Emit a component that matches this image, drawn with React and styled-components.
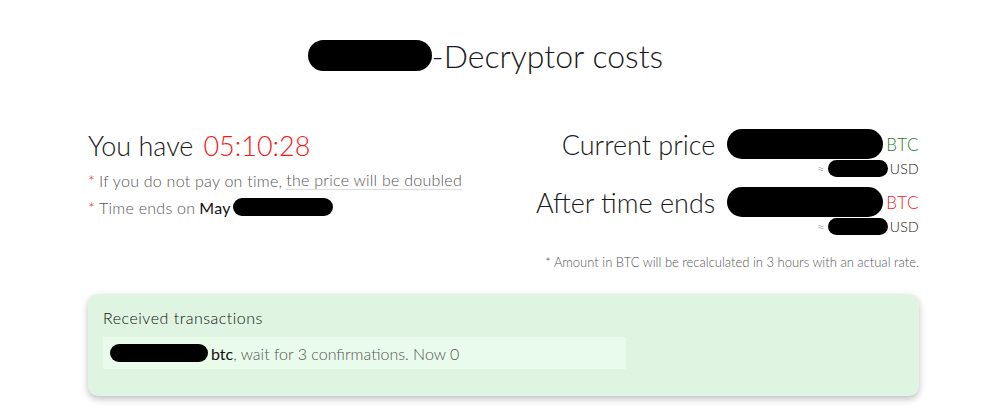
import React from 'react'
import styled, { createGlobalStyle } from 'styled-components'

const GlobalStyle = createGlobalStyle`
  html, body {
    margin: 0;
    padding: 0;
    background: #fff;
  }
  body {
    font-family: Lato, "Open Sans", sans-serif;
    font-weight: 300;
    color: #222;
  }
`

const Page = styled.div`
  width: 1000px;
  height: 418px;
  box-sizing: border-box;
  padding: 37px 81px 0 88px;
`

const Title = styled.h1`
  margin: 0;
  display: flex;
  justify-content: center;
  align-items: center;
  font-size: 32px;
  font-weight: 300;
  color: #1a1a1a;
  height: 36px;
  padding-right: 36px;
`

const Redacted = styled.span`
  display: inline-block;
  width: ${p => p.w}px;
  height: ${p => p.h}px;
  background: #000;
  border-radius: ${p => p.h / 2}px;
  vertical-align: middle;
`

const Columns = styled.div`
  display: flex;
  justify-content: space-between;
  margin-top: 56px;
`

const Left = styled.div`
  display: flex;
  flex-direction: column;
`

const Countdown = styled.div`
  font-size: 27px;
  color: #1a1a1a;
  height: 32px;
  display: flex;
  align-items: center;
  gap: 10px;
`

const Timer = styled.span`
  color: #f21b1b;
`

const Note = styled.div`
  font-size: 16px;
  letter-spacing: 0.25px;
  color: #555;
  margin-top: ${p => p.mt || 0}px;
  display: flex;
  align-items: center;
  height: 20px;
`

const Star = styled.span`
  color: #e02020;
  margin-right: 4px;
`

const Dotted = styled.span`
  border-bottom: 1px solid #ddd;
  margin-left: 4px;
`

const Strong = styled.span`
  color: #111;
  font-weight: 400;
  margin: 0 2px 0 4px;
`

const Right = styled.div`
  display: flex;
  flex-direction: column;
  align-items: flex-end;
`

const PriceRow = styled.div`
  display: flex;
  align-items: center;
  height: 30px;
  margin-top: ${p => p.mt || 0}px;
`

const PriceLabel = styled.span`
  font-size: 27px;
  color: #1a1a1a;
  margin-right: 12px;
`

const Currency = styled.span`
  font-size: 17px;
  color: ${p => p.color};
  margin-left: 3px;
  letter-spacing: 0.6px;
`

const UsdRow = styled.div`
  display: flex;
  align-items: center;
  height: 18px;
  font-size: 14px;
  color: #111;
`

const Approx = styled.span`
  color: #888;
  font-size: 14px;
  margin-right: 3px;
`

const Usd = styled.span`
  margin-left: 2px;
  letter-spacing: 0.3px;
`

const Footnote = styled.div`
  margin-top: 19px;
  font-size: 13px;
  color: #555;
`

const Card = styled.div`
  margin-top: 24px;
  background: #dff5e1;
  border-radius: 10px;
  box-shadow: 0 3px 7px rgba(0, 0, 0, 0.25);
  padding: 14px 15px 26px;
  height: 102px;
  box-sizing: border-box;
`

const CardTitle = styled.div`
  font-size: 16px;
  letter-spacing: 0.5px;
  color: #111;
`

const TxRow = styled.div`
  margin-top: 10px;
  width: 523px;
  height: 32px;
  background: #e9fbea;
  display: flex;
  align-items: center;
  padding-left: 7px;
  box-sizing: border-box;
  font-size: 16px;
  color: #555;
`

const Btc = styled.span`
  color: #111;
  font-weight: 400;
  margin-left: 3px;
`

export default function App() {
  return (
    <Page>
      <GlobalStyle />
      <Title>
        <Redacted w={124} h={31} />
        -Decryptor costs
      </Title>
      <Columns>
        <Left>
          <Countdown>
            You have <Timer>05:10:28</Timer>
          </Countdown>
          <Note mt={9}>
            <Star>*</Star> If you do not pay on time,
            <Dotted>the price will be doubled</Dotted>
          </Note>
          <Note mt={7}>
            <Star>*</Star> Time ends on <Strong>May</Strong>
            <Redacted w={100} h={18} />
          </Note>
        </Left>
        <Right>
          <PriceRow>
            <PriceLabel>Current price</PriceLabel>
            <Redacted w={156} h={30} />
            <Currency color="#2a7a2a">BTC</Currency>
          </PriceRow>
          <UsdRow>
            <Approx>≈</Approx>
            <Redacted w={60} h={17} />
            <Usd>USD</Usd>
          </UsdRow>
          <PriceRow mt={10}>
            <PriceLabel>After time ends</PriceLabel>
            <Redacted w={156} h={30} />
            <Currency color="#f21b1b">BTC</Currency>
          </PriceRow>
          <UsdRow>
            <Approx>≈</Approx>
            <Redacted w={60} h={17} />
            <Usd>USD</Usd>
          </UsdRow>
          <Footnote>* Amount in BTC will be recalculated in 3 hours with an actual rate.</Footnote>
        </Right>
      </Columns>
      <Card>
        <CardTitle>Received transactions</CardTitle>
        <TxRow>
          <Redacted w={98} h={18} />
          <Btc>btc</Btc>, wait for 3 confirmations. Now 0
        </TxRow>
      </Card>
    </Page>
  )
}
